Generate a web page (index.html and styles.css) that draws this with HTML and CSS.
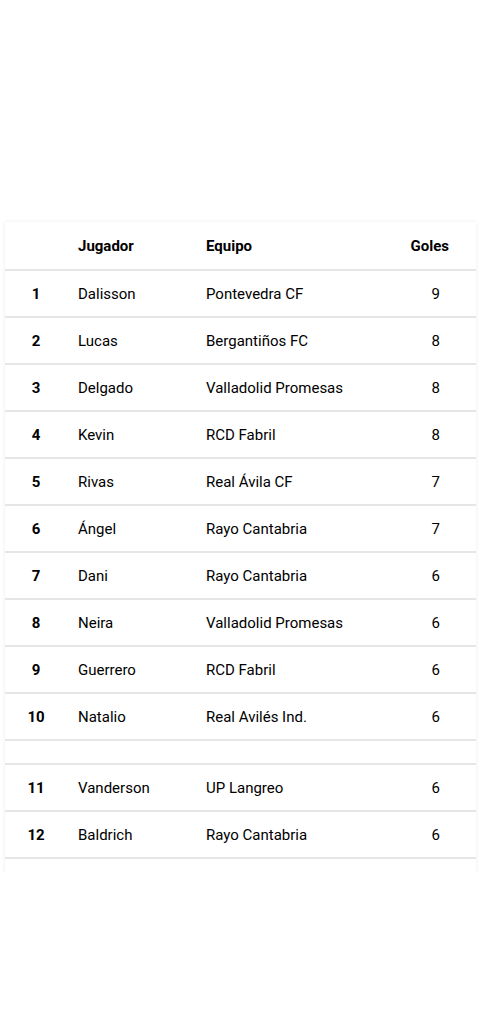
FILE: index.html
```html
<!DOCTYPE html>
<html lang="es">
<head>
  <meta charset="UTF-8" />
  <meta name="viewport" content="width=device-width, initial-scale=1.0" />
  <title>Goleadores</title>
  <link rel="stylesheet" href="styles.css">
</head>
<body>
  <div class="card">
    <table class="scorers">
      <thead>
        <tr>
          <th class="rank"></th>
          <th class="player">Jugador</th>
          <th class="team">Equipo</th>
          <th class="goals">Goles</th>
        </tr>
      </thead>
      <tbody>
        <tr><td class="rank">1</td><td class="player">Dalisson</td><td class="team">Pontevedra CF</td><td class="goals">9</td></tr>
        <tr><td class="rank">2</td><td class="player">Lucas</td><td class="team">Bergantiños FC</td><td class="goals">8</td></tr>
        <tr><td class="rank">3</td><td class="player">Delgado</td><td class="team">Valladolid Promesas</td><td class="goals">8</td></tr>
        <tr><td class="rank">4</td><td class="player">Kevin</td><td class="team">RCD Fabril</td><td class="goals">8</td></tr>
        <tr><td class="rank">5</td><td class="player">Rivas</td><td class="team">Real Ávila CF</td><td class="goals">7</td></tr>
        <tr><td class="rank">6</td><td class="player">Ángel</td><td class="team">Rayo Cantabria</td><td class="goals">7</td></tr>
        <tr><td class="rank">7</td><td class="player">Dani</td><td class="team">Rayo Cantabria</td><td class="goals">6</td></tr>
        <tr><td class="rank">8</td><td class="player">Neira</td><td class="team">Valladolid Promesas</td><td class="goals">6</td></tr>
        <tr><td class="rank">9</td><td class="player">Guerrero</td><td class="team">RCD Fabril</td><td class="goals">6</td></tr>
        <tr><td class="rank">10</td><td class="player">Natalio</td><td class="team">Real Avilés Ind.</td><td class="goals">6</td></tr>
        <tr class="spacer"><td colspan="4"></td></tr>
        <tr><td class="rank">11</td><td class="player">Vanderson</td><td class="team">UP Langreo</td><td class="goals">6</td></tr>
        <tr><td class="rank">12</td><td class="player">Baldrich</td><td class="team">Rayo Cantabria</td><td class="goals">6</td></tr>
      </tbody>
    </table>
  </div>
</body>
</html>
```

FILE: styles.css
```css
body {
  margin: 0;
  padding-top: 222px;
  background: #fff;
  font-family: Roboto, "Liberation Sans", sans-serif;
  color: #000;
}
.card {
  width: 471px;
  margin-left: 5px;
  padding-bottom: 14px;
  background: #fff;
  box-shadow: 0 0 4px rgba(0,0,0,0.08);
}
.scorers {
  width: 100%;
  border-collapse: collapse;
  font-size: 15px;
}
.scorers th,
.scorers td {
  height: 45px;
  padding: 0;
  border-bottom: 2px solid #e6e6e6;
  text-align: left;
  vertical-align: middle;
}
.scorers th {
  height: 47px;
  font-weight: bold;
}
.scorers .rank {
  width: 62px;
  text-align: center;
  font-weight: bold;
}
.scorers .player {
  width: 128px;
  padding-left: 11px;
}
.scorers .team {
  width: 194px;
}
.scorers th.goals {
  text-align: right;
  padding-right: 27px;
}
.scorers td.goals {
  text-align: right;
  padding-right: 36px;
}
.scorers .spacer td {
  height: 22px;
}
```
